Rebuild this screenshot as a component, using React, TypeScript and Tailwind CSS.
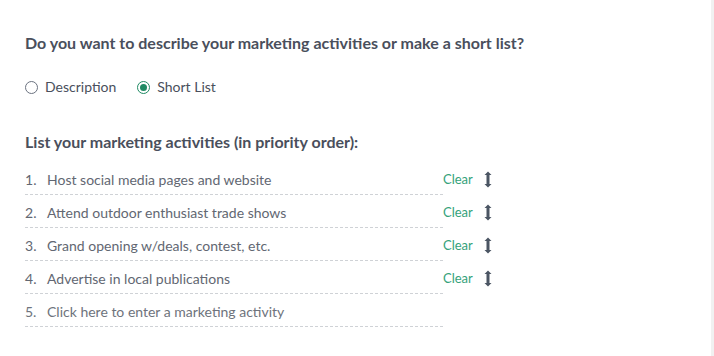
import React from "react";

const items = [
  "Host social media pages and website",
  "Attend outdoor enthusiast trade shows",
  "Grand opening w/deals, contest, etc.",
  "Advertise in local publications",
];

function ArrowsV() {
  return (
    <svg width="8" height="17" viewBox="0 0 8 17" className="text-[#4b5563]">
      <path d="M4 0.5 L7.5 4 L5.5 4 L5.5 13 L7.5 13 L4 16.5 L0.5 13 L2.5 13 L2.5 4 L0.5 4 Z" fill="currentColor" />
    </svg>
  );
}

export default function App() {
  return (
    <div className="flex w-[714px] h-[356px] bg-white" style={{ fontFamily: "Lato, 'Open Sans', sans-serif" }}>
      <div className="flex-1 pl-[25px] pt-[33px]">
        <h2 className="text-[16px] font-bold text-[#4a4f5c] leading-[20px]">
          Do you want to describe your marketing activities or make a short list?
        </h2>
        <div className="mt-[25px] flex items-center text-[14px] text-[#4a4f5c] leading-[18px]">
          <label className="flex items-center gap-[7px]">
            <span className="w-[13px] h-[13px] rounded-full border border-[#6b7280] bg-white" />
            <span>Description</span>
          </label>
          <label className="flex items-center gap-[7px] ml-[21px]">
            <span className="w-[13px] h-[13px] rounded-full border-[1.5px] border-[#1f8a63] flex items-center justify-center">
              <span className="w-[7px] h-[7px] rounded-full bg-[#1f8a63]" />
            </span>
            <span>Short List</span>
          </label>
        </div>
        <h3 className="mt-[36px] text-[16px] font-bold text-[#4a4f5c] leading-[20px]">
          List your marketing activities (in priority order):
        </h3>
        <div className="mt-[10px] flex flex-col">
          {items.map((t, i) => (
            <div key={i} className="flex items-end h-[33px]">
              <div className="w-[418px] flex items-center h-[27px] pb-[3px] border-b border-dashed border-[#cfd2d6] text-[14px] text-[#626772]">
                <span className="w-[22px]">{i + 1}.</span>
                <span>{t}</span>
              </div>
              <div className="flex items-center h-[27px] pb-[4px]">
                <span className="text-[13px] text-[#34a27a]">Clear</span>
                <span className="ml-[11px]"><ArrowsV /></span>
              </div>
            </div>
          ))}
          <div className="flex items-end h-[33px]">
            <div className="w-[418px] flex items-center h-[27px] pb-[3px] border-b border-dashed border-[#cfd2d6] text-[14px] text-[#6e737c]">
              <span className="w-[22px]">5.</span>
              <span>Click here to enter a marketing activity</span>
            </div>
          </div>
        </div>
      </div>
      <div className="w-[3px] bg-[#f1f1f1]" />
    </div>
  );
}
